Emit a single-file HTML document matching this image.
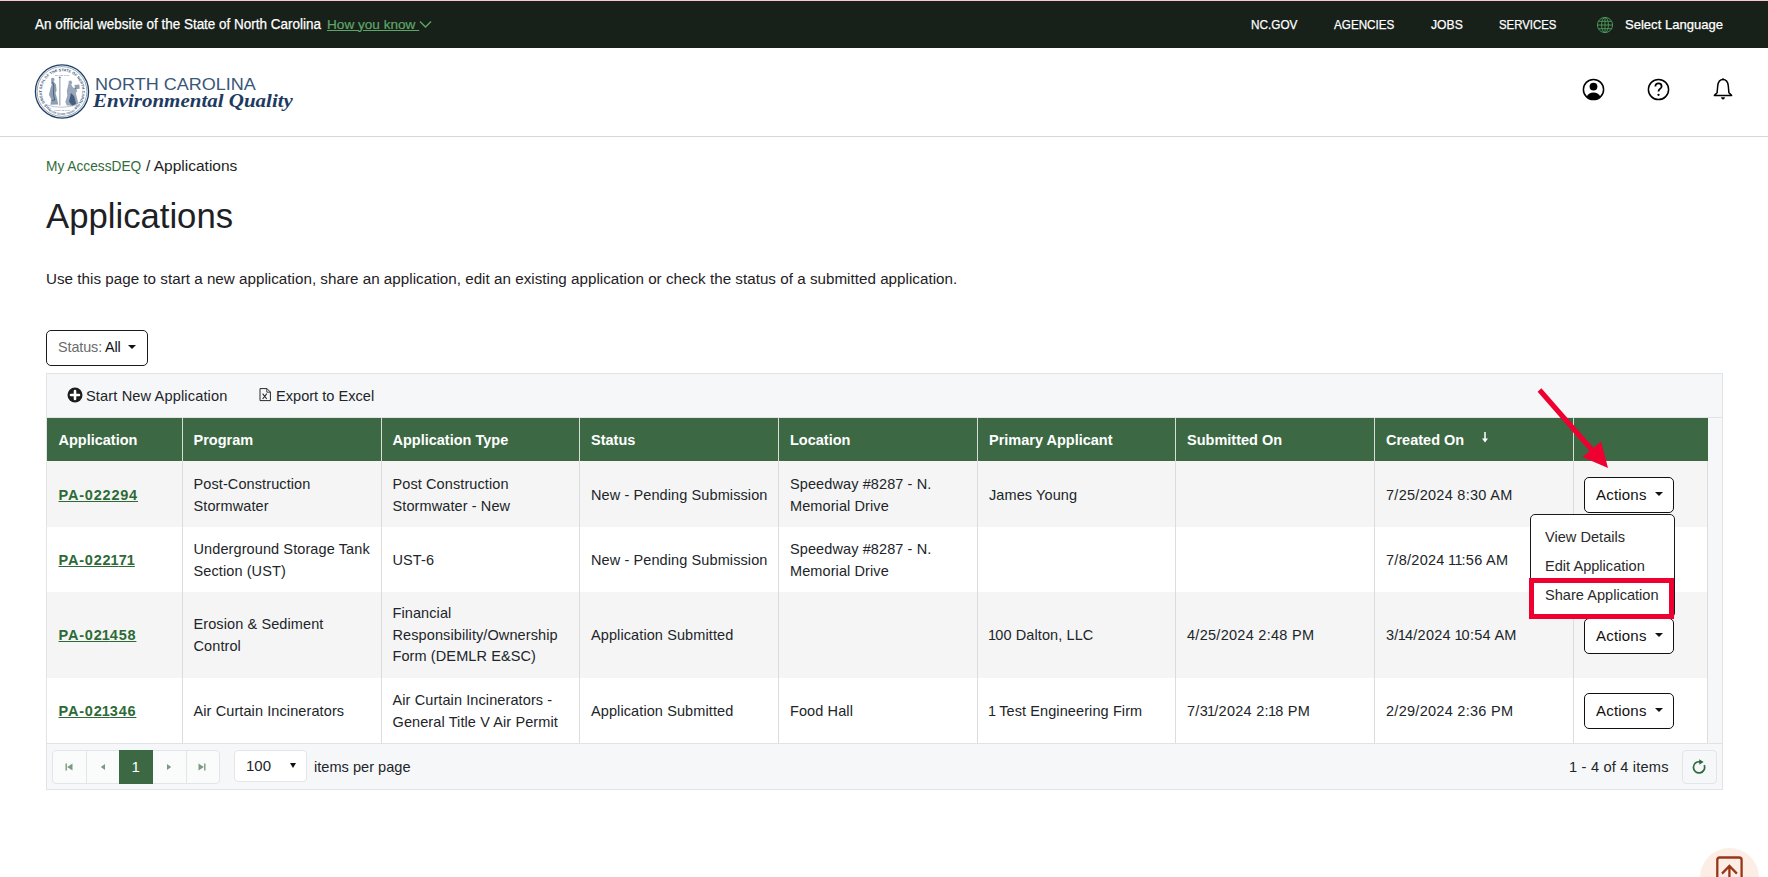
<!DOCTYPE html>
<html><head><meta charset="utf-8">
<style>
*{box-sizing:border-box;margin:0;padding:0}
html,body{width:1768px;height:877px;overflow:hidden;background:#fff;font-family:"Liberation Sans",sans-serif;color:#212529}
.abs{position:absolute}
.t{position:absolute;white-space:nowrap;line-height:1}
#pink{left:0;top:0;width:1768px;height:1px;background:#fcc6d4}
#topbar{left:0;top:1px;width:1768px;height:47px;background:#17211a}
#hdr{left:0;top:48px;width:1768px;height:89px;border-bottom:1px solid #d8d8d8;background:#fff}
.wt{color:#fff;font-size:13px;-webkit-text-stroke:0.25px #fff}
.th{color:#fff;font-weight:700;font-size:14.5px;margin-top:-1px}
.td{position:absolute;display:flex;align-items:center;padding:3px 0 0 11.5px;font-size:14.5px;line-height:21.6px;letter-spacing:0.1px;color:#212529}
.lnk{color:#2d6a37;font-weight:700;text-decoration:underline;letter-spacing:0.8px;text-underline-offset:1px}
.abtn{position:absolute;width:90px;height:36px;border:1px solid #111;border-radius:5px;background:#fff;font-size:15px;line-height:34px;padding-left:11px;letter-spacing:0.2px;color:#111}
.caret{position:absolute;left:70.2px;top:14.4px;width:0;height:0;border-left:4.5px solid transparent;border-right:4.5px solid transparent;border-top:4.5px solid #111}
.mi{font-size:14.6px;color:#2a2a2a;margin-top:-0.7px}
.dt{letter-spacing:0.28px}
.n1{font-style:normal;letter-spacing:-0.9px;margin-left:-0.9px}
.lnk .n1{letter-spacing:0px;margin-left:-0.8px}
</style></head><body>
<div id="pink" class="abs"></div>
<div id="topbar" class="abs">
  <div class="t" style="left:35px;top:16px;font-size:14px;color:#fff;-webkit-text-stroke:0.25px #fff;transform:scaleX(0.963);transform-origin:0 0">An official website of the State of North Carolina</div>
  <div class="t" style="left:327px;top:16.5px;font-size:13.6px;color:#5fa768;text-decoration:underline;-webkit-text-stroke:0.2px #5fa768">How you know&nbsp;</div>
  <svg class="abs" style="left:419px;top:18px" width="13" height="10" viewBox="0 0 13 10"><path d="M1 2.5 L6.5 8 L12 2.5" fill="none" stroke="#5fa768" stroke-width="1.3"/></svg>
  <div class="t wt" style="left:1251px;top:17px;transform:scaleX(0.906);transform-origin:0 0">NC.GOV</div>
  <div class="t wt" style="left:1334px;top:17px;transform:scaleX(0.899);transform-origin:0 0">AGENCIES</div>
  <div class="t wt" style="left:1431px;top:17px;transform:scaleX(0.935);transform-origin:0 0">JOBS</div>
  <div class="t wt" style="left:1499px;top:17px;transform:scaleX(0.876);transform-origin:0 0">SERVICES</div>
  <svg class="abs" style="left:1596px;top:15px" width="18" height="18" viewBox="0 0 18 18"><g fill="none" stroke="#4f9d5c" stroke-width="0.9"><circle cx="9" cy="9" r="7.6"/><ellipse cx="9" cy="9" rx="3.4" ry="7.6"/><line x1="9" y1="1.4" x2="9" y2="16.6"/><line x1="1.4" y1="9" x2="16.6" y2="9"/><line x1="2.6" y1="5.3" x2="15.4" y2="5.3"/><line x1="2.6" y1="12.7" x2="15.4" y2="12.7"/></g></svg>
  <div class="t" style="left:1625px;top:16.5px;font-size:13.6px;color:#fff;-webkit-text-stroke:0.25px #fff;transform:scaleX(0.96);transform-origin:0 0">Select Language</div>
</div>
<div id="hdr" class="abs">
  <svg class="abs" style="left:34px;top:15px" width="56" height="57" viewBox="0 0 56 57">
    <defs><path id="ringTop" d="M17.24 45.72 A20.3 20.3 0 1 1 38.76 45.72"/><path id="ringBot" d="M13.59 46.94 A23.4 23.4 0 0 0 42.41 46.94"/></defs>
    <g fill="none" stroke="#203f66">
      <circle cx="28" cy="28.5" r="26.6" stroke-width="1.3"/>
      <circle cx="28" cy="28.5" r="24.9" stroke-width="0.45"/>
    </g>
    <text font-family="Liberation Sans" font-size="3.7" font-weight="700" fill="#203f66" opacity="0.9"><textPath href="#ringTop" textLength="102.8" lengthAdjust="spacing">THE GREAT SEAL OF THE STATE OF NORTH CAROLINA</textPath></text>
    <text font-family="Liberation Sans" font-size="2.8" font-weight="700" fill="#203f66" opacity="0.75"><textPath href="#ringBot" textLength="31.0" lengthAdjust="spacing">* ESSE QUAM VIDERI *</textPath></text>
    <g fill="#203f66">
      <text x="28" y="12.6" font-family="Liberation Sans" font-size="2.3" font-weight="700" text-anchor="middle" opacity="0.6">MAY 20 1775</text>
      <text x="28" y="48.2" font-family="Liberation Sans" font-size="2.3" font-weight="700" text-anchor="middle" opacity="0.6">APRIL 12 1776</text>
      <path d="M17.2 15.2 q2 -1.3 3.2 0.5 q0.3 1.8 -0.8 2.7 l2.4 3.2 l0.6 6 l-1.1 2.4 l1.6 5.8 l1.2 5.6 l-7.8 0.4 l0.7 -5.8 l-2.2 -4.2 l1.5 -6.8 l1.3 -3.6 q-1.3 -1.1 -0.6 -2.2 z" opacity="0.5"/>
      <path d="M18.6 19 l1.2 4 l-0.4 8 l1.4 6 l-2.8 0.4" fill="none" stroke="#203f66" stroke-width="0.9" opacity="0.7"/>
      <rect x="25.3" y="14.5" width="1.1" height="28" opacity="0.5"/>
      <path d="M24.4 14.6 q1.4 -2 2.8 0 q-1.4 0.9 -2.8 0z" opacity="0.6"/>
      <path d="M34.6 18.2 q2.2 -1.5 3.5 0.7 q0.2 1.7 -0.9 2.6 l1.8 3 l3 0.7 l1.3 2.8 l-1.5 1.9 l1.1 4.6 l1.5 6.1 l-5.6 2.2 l-6 -0.2 l-1.5 -3.7 l2 -6.1 l-0.5 -5 l1.1 -4.3 q-0.5 -1.1 0.6 -1.7 z" opacity="0.45"/>
      <path d="M37 30 q3 2 4 6 l1 5 l-4 1.6 l-3 -4 z" opacity="0.7"/>
      <path d="M40.5 22 l4.8 -0.5 l0.4 4.2 l-4.6 0.5 z" opacity="0.5"/>
      <path d="M13 42 q7 2.4 15 2.2 q8 -0.2 15 -2.4" fill="none" stroke="#203f66" stroke-width="0.6" opacity="0.5"/>
    </g>
  </svg>
  <div class="t" style="left:95px;top:28px;font-size:16.2px;color:#3a5779;font-weight:400;transform:scaleX(1.113);transform-origin:0 0">NORTH CAROLINA</div>
  <div class="t" style="left:93px;top:44px;font-family:'Liberation Serif',serif;font-size:18.6px;font-weight:700;font-style:italic;color:#1d3b60;transform:scaleX(1.128);transform-origin:0 0">Environmental Quality</div>
  <svg class="abs" style="left:1582px;top:29.5px" width="23" height="23" viewBox="0 0 23 23">
    <circle cx="11.5" cy="11.5" r="10.1" fill="none" stroke="#000" stroke-width="1.5"/>
    <circle cx="11.5" cy="8.6" r="3.9" fill="#000"/>
    <path d="M4.6 18.6 Q7 14.6 11.5 14.6 Q16 14.6 18.4 18.6 Q15.6 21.6 11.5 21.6 Q7.4 21.6 4.6 18.6 Z" fill="#000"/>
  </svg>
  <svg class="abs" style="left:1647px;top:29.5px" width="23" height="23" viewBox="0 0 23 23">
    <circle cx="11.5" cy="11.5" r="10.1" fill="none" stroke="#000" stroke-width="1.5"/>
    <path d="M8.4 8.6 Q8.4 5.3 11.6 5.3 Q14.6 5.3 14.6 8.2 Q14.6 10 12.8 11 Q11.5 11.8 11.5 13.6" fill="none" stroke="#000" stroke-width="1.8"/>
    <circle cx="11.5" cy="16.8" r="1.15" fill="#000"/>
  </svg>
  <svg class="abs" style="left:1713px;top:29px" width="20" height="24" viewBox="0 0 20 24">
    <path d="M10 2.6 Q5.4 2.6 4.7 9 L4.1 15.8 L1.4 18.4 L18.6 18.4 L15.9 15.8 L15.3 9 Q14.6 2.6 10 2.6 Z" fill="none" stroke="#000" stroke-width="1.5" stroke-linejoin="round"/>
    <circle cx="10" cy="2.3" r="1" fill="#000"/>
    <path d="M8 20.2 L12 20.2 Q11.6 22.6 10 22.6 Q8.4 22.6 8 20.2 Z" fill="#000"/>
  </svg>
</div>
<div class="t" style="left:46px;top:157.5px;font-size:15.5px;color:#316c3c;transform:scaleX(0.885);transform-origin:0 0">My AccessDEQ</div>
<div class="t" style="left:146px;top:157.5px;font-size:15.5px;color:#1e1e1e">/ Applications</div>
<div class="t" style="left:46px;top:198.5px;font-size:34.7px;color:#1e2124">Applications</div>
<div class="t" style="left:46px;top:271px;font-size:15.2px;letter-spacing:0.02px;color:#1e2124">Use this page to start a new application, share an application, edit an existing application or check the status of a submitted application.</div>

<!--GRID-->
<div class="abs" style="left:46px;top:373px;width:1677px;height:417px;background:#f6f7f9;border:1px solid #e1e3e6"></div>
<div class="abs" style="left:47px;top:417px;width:1675px;height:1px;background:#e1e3e6"></div>
<svg class="abs" style="left:66.5px;top:387px" width="16" height="16" viewBox="0 0 16 16"><circle cx="8" cy="8" r="7.5" fill="#1c1c1c"/><path d="M8 4V12M4 8H12" stroke="#fff" stroke-width="2.6" stroke-linecap="round"/></svg>
<div class="t" style="left:86px;top:389px;font-size:14.6px;letter-spacing:0.13px;color:#212529">Start New Application</div>
<svg class="abs" style="left:259px;top:388px" width="13" height="14" viewBox="0 0 13 14"><path d="M1 0.6H8L11.4 4V12.6H1Z" fill="none" stroke="#2a2a2a" stroke-width="1"/><path d="M7.8 0.6V4.2H11.4" fill="none" stroke="#2a2a2a" stroke-width="0.9"/><path d="M3.6 5.6L7.8 11M7.8 5.6L3.6 11" stroke="#2a2a2a" stroke-width="1.1"/></svg>
<div class="t" style="left:276px;top:389px;font-size:14.6px;color:#212529">Export to Excel</div>
<div class="abs" style="left:47px;top:418px;width:1661px;height:43px;background:#3c6944"></div>
<div class="abs" style="left:181.5px;top:418px;width:1px;height:43px;background:#d7ddd8"></div>
<div class="abs" style="left:380.5px;top:418px;width:1px;height:43px;background:#d7ddd8"></div>
<div class="abs" style="left:579.0px;top:418px;width:1px;height:43px;background:#d7ddd8"></div>
<div class="abs" style="left:778.0px;top:418px;width:1px;height:43px;background:#d7ddd8"></div>
<div class="abs" style="left:977.0px;top:418px;width:1px;height:43px;background:#d7ddd8"></div>
<div class="abs" style="left:1175.0px;top:418px;width:1px;height:43px;background:#d7ddd8"></div>
<div class="abs" style="left:1374.0px;top:418px;width:1px;height:43px;background:#d7ddd8"></div>
<div class="abs" style="left:1572.5px;top:418px;width:1px;height:43px;background:#d7ddd8"></div>
<div class="t th" style="left:58.5px;top:434px">Application</div>
<div class="t th" style="left:193.5px;top:434px">Program</div>
<div class="t th" style="left:392.5px;top:434px">Application Type</div>
<div class="t th" style="left:591.0px;top:434px">Status</div>
<div class="t th" style="left:790.0px;top:434px">Location</div>
<div class="t th" style="left:989.0px;top:434px">Primary Applicant</div>
<div class="t th" style="left:1187.0px;top:434px">Submitted On</div>
<div class="t th" style="left:1386.0px;top:434px">Created On</div>
<svg class="abs" style="left:1480px;top:431px" width="10" height="13" viewBox="0 0 10 13"><path d="M5 1V10" stroke="#fff" stroke-width="1.5"/><path d="M2 7.5L5 11.5L8 7.5Z" fill="#fff"/></svg>
<div class="abs" style="left:47px;top:461px;width:1661px;height:66px;background:#f5f5f5"></div>
<div class="abs" style="left:181.5px;top:461px;width:1px;height:66px;background:#dcdcdc"></div>
<div class="abs" style="left:380.5px;top:461px;width:1px;height:66px;background:#dcdcdc"></div>
<div class="abs" style="left:579.0px;top:461px;width:1px;height:66px;background:#dcdcdc"></div>
<div class="abs" style="left:778.0px;top:461px;width:1px;height:66px;background:#dcdcdc"></div>
<div class="abs" style="left:977.0px;top:461px;width:1px;height:66px;background:#dcdcdc"></div>
<div class="abs" style="left:1175.0px;top:461px;width:1px;height:66px;background:#dcdcdc"></div>
<div class="abs" style="left:1374.0px;top:461px;width:1px;height:66px;background:#dcdcdc"></div>
<div class="abs" style="left:1572.5px;top:461px;width:1px;height:66px;background:#dcdcdc"></div>
<div class="abs" style="left:1707px;top:461px;width:1px;height:66px;background:#dcdcdc"></div>
<div class="td" style="left:47px;top:461px;width:135px;height:66px"><span class="lnk">PA-022294</span></div>
<div class="td" style="left:182px;top:461px;width:199px;height:66px"><span>Post-Construction<br>Stormwater</span></div>
<div class="td" style="left:381px;top:461px;width:198.5px;height:66px"><span>Post Construction<br>Stormwater - New</span></div>
<div class="td" style="left:579.5px;top:461px;width:199.0px;height:66px"><span>New - Pending Submission</span></div>
<div class="td" style="left:778.5px;top:461px;width:199.0px;height:66px"><span>Speedway #8287 - N.<br>Memorial Drive</span></div>
<div class="td" style="left:977.5px;top:461px;width:198.0px;height:66px"><span>James Young</span></div>
<div class="td" style="left:1374.5px;top:461px;width:198.5px;height:66px"><span class="dt">7/25/2024 8:30 AM</span></div>
<div class="abtn" style="left:1584px;top:477.0px">Actions<span class="caret"></span></div>
<div class="abs" style="left:47px;top:527px;width:1661px;height:65px;background:#ffffff"></div>
<div class="abs" style="left:181.5px;top:527px;width:1px;height:65px;background:#dcdcdc"></div>
<div class="abs" style="left:380.5px;top:527px;width:1px;height:65px;background:#dcdcdc"></div>
<div class="abs" style="left:579.0px;top:527px;width:1px;height:65px;background:#dcdcdc"></div>
<div class="abs" style="left:778.0px;top:527px;width:1px;height:65px;background:#dcdcdc"></div>
<div class="abs" style="left:977.0px;top:527px;width:1px;height:65px;background:#dcdcdc"></div>
<div class="abs" style="left:1175.0px;top:527px;width:1px;height:65px;background:#dcdcdc"></div>
<div class="abs" style="left:1374.0px;top:527px;width:1px;height:65px;background:#dcdcdc"></div>
<div class="abs" style="left:1572.5px;top:527px;width:1px;height:65px;background:#dcdcdc"></div>
<div class="abs" style="left:1707px;top:527px;width:1px;height:65px;background:#dcdcdc"></div>
<div class="td" style="left:47px;top:527px;width:135px;height:65px"><span class="lnk">PA-022<i class="n1">1</i>7<i class="n1">1</i></span></div>
<div class="td" style="left:182px;top:527px;width:199px;height:65px"><span>Underground Storage Tank<br>Section (UST)</span></div>
<div class="td" style="left:381px;top:527px;width:198.5px;height:65px"><span>UST-6</span></div>
<div class="td" style="left:579.5px;top:527px;width:199.0px;height:65px"><span>New - Pending Submission</span></div>
<div class="td" style="left:778.5px;top:527px;width:199.0px;height:65px"><span>Speedway #8287 - N.<br>Memorial Drive</span></div>
<div class="td" style="left:1374.5px;top:527px;width:198.5px;height:65px"><span class="dt">7/8/2024 <i class="n1">1</i><i class="n1">1</i>:56 AM</span></div>
<div class="abs" style="left:47px;top:592px;width:1661px;height:86px;background:#f5f5f5"></div>
<div class="abs" style="left:181.5px;top:592px;width:1px;height:86px;background:#dcdcdc"></div>
<div class="abs" style="left:380.5px;top:592px;width:1px;height:86px;background:#dcdcdc"></div>
<div class="abs" style="left:579.0px;top:592px;width:1px;height:86px;background:#dcdcdc"></div>
<div class="abs" style="left:778.0px;top:592px;width:1px;height:86px;background:#dcdcdc"></div>
<div class="abs" style="left:977.0px;top:592px;width:1px;height:86px;background:#dcdcdc"></div>
<div class="abs" style="left:1175.0px;top:592px;width:1px;height:86px;background:#dcdcdc"></div>
<div class="abs" style="left:1374.0px;top:592px;width:1px;height:86px;background:#dcdcdc"></div>
<div class="abs" style="left:1572.5px;top:592px;width:1px;height:86px;background:#dcdcdc"></div>
<div class="abs" style="left:1707px;top:592px;width:1px;height:86px;background:#dcdcdc"></div>
<div class="td" style="left:47px;top:592px;padding-top:1px;width:135px;height:86px"><span class="lnk">PA-02<i class="n1">1</i>458</span></div>
<div class="td" style="left:182px;top:592px;padding-top:1px;width:199px;height:86px"><span>Erosion &amp; Sediment<br>Control</span></div>
<div class="td" style="left:381px;top:592px;padding-top:1px;width:198.5px;height:86px"><span>Financial<br>Responsibility/Ownership<br>Form (DEMLR E&amp;SC)</span></div>
<div class="td" style="left:579.5px;top:592px;padding-top:1px;width:199.0px;height:86px"><span>Application Submitted</span></div>
<div class="td" style="left:977.5px;top:592px;padding-top:1px;width:198.0px;height:86px"><span><i class="n1">1</i>00 Dalton, LLC</span></div>
<div class="td" style="left:1175.5px;top:592px;padding-top:1px;width:199.0px;height:86px"><span class="dt">4/25/2024 2:48 PM</span></div>
<div class="td" style="left:1374.5px;top:592px;padding-top:1px;width:198.5px;height:86px"><span class="dt">3/<i class="n1">1</i>4/2024 <i class="n1">1</i>0:54 AM</span></div>
<div class="abtn" style="left:1584px;top:618.0px">Actions<span class="caret"></span></div>
<div class="abs" style="left:47px;top:678px;width:1661px;height:65px;background:#ffffff"></div>
<div class="abs" style="left:181.5px;top:678px;width:1px;height:65px;background:#dcdcdc"></div>
<div class="abs" style="left:380.5px;top:678px;width:1px;height:65px;background:#dcdcdc"></div>
<div class="abs" style="left:579.0px;top:678px;width:1px;height:65px;background:#dcdcdc"></div>
<div class="abs" style="left:778.0px;top:678px;width:1px;height:65px;background:#dcdcdc"></div>
<div class="abs" style="left:977.0px;top:678px;width:1px;height:65px;background:#dcdcdc"></div>
<div class="abs" style="left:1175.0px;top:678px;width:1px;height:65px;background:#dcdcdc"></div>
<div class="abs" style="left:1374.0px;top:678px;width:1px;height:65px;background:#dcdcdc"></div>
<div class="abs" style="left:1572.5px;top:678px;width:1px;height:65px;background:#dcdcdc"></div>
<div class="abs" style="left:1707px;top:678px;width:1px;height:65px;background:#dcdcdc"></div>
<div class="td" style="left:47px;top:678px;width:135px;height:65px"><span class="lnk">PA-02<i class="n1">1</i>346</span></div>
<div class="td" style="left:182px;top:678px;width:199px;height:65px"><span>Air Curtain Incinerators</span></div>
<div class="td" style="left:381px;top:678px;width:198.5px;height:65px"><span>Air Curtain Incinerators -<br>General Title V Air Permit</span></div>
<div class="td" style="left:579.5px;top:678px;width:199.0px;height:65px"><span>Application Submitted</span></div>
<div class="td" style="left:778.5px;top:678px;width:199.0px;height:65px"><span>Food Hall</span></div>
<div class="td" style="left:977.5px;top:678px;width:198.0px;height:65px"><span><i class="n1">1</i> Test Engineering Firm</span></div>
<div class="td" style="left:1175.5px;top:678px;width:199.0px;height:65px"><span class="dt">7/3<i class="n1">1</i>/2024 2:<i class="n1">1</i>8 PM</span></div>
<div class="td" style="left:1374.5px;top:678px;width:198.5px;height:65px"><span class="dt">2/29/2024 2:36 PM</span></div>
<div class="abtn" style="left:1584px;top:693px">Actions<span class="caret"></span></div>
<div class="abs" style="left:47px;top:743px;width:1675px;height:1px;background:#e1e3e6"></div>
<!--/GRID-->
<!--EXTRA-->
<div class="abs" style="left:46px;top:330px;width:102px;height:36px;border:1px solid #1a1a1a;border-radius:5px;background:#fff"></div>
<div class="t" style="left:58px;top:340px;font-size:14.4px;color:#6c6c6c;letter-spacing:-0.1px">Status:</div>
<div class="t" style="left:105px;top:340px;font-size:14.4px;color:#111;letter-spacing:-0.1px">All</div>
<div class="abs" style="left:128px;top:345px;width:0;height:0;border-left:4px solid transparent;border-right:4px solid transparent;border-top:4.5px solid #111"></div>
<!-- pager -->
<div class="abs" style="left:52px;top:750px;width:168px;height:34px;border:1px solid #e3e5e8;border-radius:4px;background:#fafbfb"></div>
<div class="abs" style="left:86px;top:751px;width:1px;height:32px;background:#e3e5e8"></div>
<div class="abs" style="left:186px;top:751px;width:1px;height:32px;background:#e3e5e8"></div>
<div class="abs" style="left:119px;top:750px;width:34px;height:34px;background:#3c6944"></div>
<div class="t" style="left:131.5px;top:759px;font-size:15px;color:#fff">1</div>
<svg class="abs" style="left:64px;top:762px" width="10" height="10" viewBox="0 0 10 10"><rect x="1.5" y="1.5" width="1.4" height="7" fill="#7a9a80"/><path d="M8.5 1.5V8.5L3.2 5Z" fill="#7a9a80"/></svg>
<svg class="abs" style="left:98px;top:762px" width="10" height="10" viewBox="0 0 10 10"><path d="M7 2V8L2.8 5Z" fill="#7a9a80"/></svg>
<svg class="abs" style="left:164px;top:762px" width="10" height="10" viewBox="0 0 10 10"><path d="M3 2V8L7.2 5Z" fill="#7a9a80"/></svg>
<svg class="abs" style="left:197px;top:762px" width="10" height="10" viewBox="0 0 10 10"><path d="M1.5 1.5V8.5L6.8 5Z" fill="#7a9a80"/><rect x="7.1" y="1.5" width="1.4" height="7" fill="#7a9a80"/></svg>
<div class="abs" style="left:234px;top:750px;width:73px;height:32px;border:1px solid #e3e5e8;border-radius:4px;background:#fff"></div>
<div class="t" style="left:246px;top:758px;font-size:15px;color:#212529">100</div>
<div class="abs" style="left:290px;top:763px;width:0;height:0;border-left:3.8px solid transparent;border-right:3.8px solid transparent;border-top:5px solid #111"></div>
<div class="t" style="left:314px;top:760px;font-size:14.6px;color:#212529">items per page</div>
<div class="t" style="left:1569px;top:760px;font-size:14.6px;color:#212529;letter-spacing:0.2px">1 - 4 of 4 items</div>
<div class="abs" style="left:1682px;top:750px;width:35px;height:34px;border:1px solid #e3e5e8;border-radius:4px;background:#f6f7f9"></div>
<svg class="abs" style="left:1691px;top:759px" width="16" height="16" viewBox="0 0 16 16"><path d="M9.3 2.9A5.6 5.6 0 1 0 13.2 6.2" fill="none" stroke="#2f6a3a" stroke-width="1.7"/><path d="M8.2 0.2L12.6 3L8.3 5.8Z" fill="#2f6a3a"/></svg>
<!-- dropdown -->
<div class="abs" style="left:1530px;top:514px;width:145px;height:104px;border:1px solid #1a1a1a;border-radius:5px;background:#fff"></div>
<div class="t mi" style="left:1545px;top:531px">View Details</div>
<div class="t mi" style="left:1545px;top:560px">Edit Application</div>
<div class="t mi" style="left:1545px;top:589px">Share Application</div>
<div class="abs" style="left:1528.5px;top:577.5px;width:145px;height:41px;border:5px solid #ee0030"></div>
<!-- arrow -->
<svg class="abs" style="left:0;top:0" width="1768" height="877" viewBox="0 0 1768 877"><line x1="1539.5" y1="390" x2="1592" y2="450" stroke="#ee0030" stroke-width="5"/><path d="M1608 468 L1582.5 457 L1601 441.5 Z" fill="#ee0030"/></svg>
<!-- back to top -->
<div class="abs" style="left:1700px;top:848px;width:59px;height:59px;border-radius:50%;background:#fdeee5"></div>
<svg class="abs" style="left:1712px;top:852px" width="36" height="25" viewBox="0 0 36 25"><path d="M5.3 25V8Q5.3 5.5 7.8 5.5H27.1Q29.6 5.5 29.6 8V25" fill="none" stroke="#9a3519" stroke-width="2.3"/><path d="M17.4 25V14.2M10 21.6L17.4 14L24.9 21.6" fill="none" stroke="#9a3519" stroke-width="2.3"/></svg>
<!--/EXTRA-->
</body></html>
